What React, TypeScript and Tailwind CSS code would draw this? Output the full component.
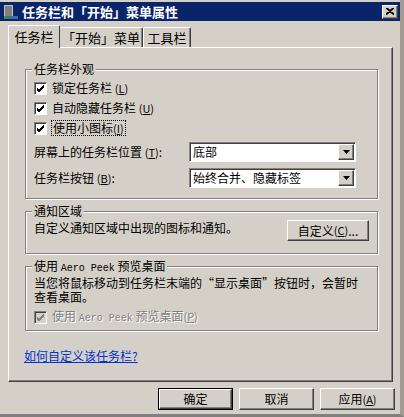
import React from "react";

const FONT = { fontFamily: '"SimSun", "Noto Sans CJK SC", "Noto Sans", sans-serif' };

const raised =
  "border border-t-white border-l-white border-r-[#404040] border-b-[#404040] shadow-[inset_-1px_-1px_0_#808080]";
const sunken =
  "border border-t-[#808080] border-l-[#808080] border-r-white border-b-white shadow-[inset_1px_1px_0_#404040]";

function Key({ k }: { k: string }) {
  return (
    <span className="text-[11px]">
      (<span className="underline">{k}</span>)
    </span>
  );
}

function Check({ disabled = false }: { disabled?: boolean }) {
  return (
    <span className={`w-[13px] h-[13px] shrink-0 flex items-center justify-center ${sunken} ${disabled ? "bg-[#d4d0c8]" : "bg-white"}`}>
      <svg width="9" height="9" viewBox="0 0 9 9">
        <path
          d="M1 4 L3 6 L8 1 M1 5 L3 7 L8 2 M1 6 L3 8 L8 3"
          stroke={disabled ? "#808080" : "#000"}
          strokeWidth="1"
          fill="none"
        />
      </svg>
    </span>
  );
}

function Group({ title, className, children }: { title: React.ReactNode; className?: string; children: React.ReactNode }) {
  return (
    <div className={`relative border border-[#808080] shadow-[inset_1px_1px_0_#fff,1px_1px_0_#fff] ${className ?? ""}`}>
      <span className="absolute -top-[7px] left-[6px] px-[2px] bg-[#d4d0c8] leading-[12px]">{title}</span>
      {children}
    </div>
  );
}

function Combo({ value }: { value: string }) {
  return (
    <div className={`w-[167px] h-[20px] bg-white flex items-center ${sunken}`}>
      <span className="flex-1 pl-[3px] leading-[14px]">{value}</span>
      <span className={`w-[16px] h-[16px] mr-[1px] bg-[#d4d0c8] flex items-center justify-center ${raised}`}>
        <svg width="7" height="4" viewBox="0 0 7 4">
          <path d="M0 0 H7 L3.5 4 Z" fill="#000" />
        </svg>
      </span>
    </div>
  );
}

function Button({ children, isDefault = false }: { children: React.ReactNode; isDefault?: boolean }) {
  return (
    <div className={`w-[75px] h-[22px] ${isDefault ? "border border-black" : ""}`}>
      <div className={`w-full h-full bg-[#d4d0c8] flex items-center justify-center leading-[14px] ${raised}`}>
        {children}
      </div>
    </div>
  );
}

export default function App() {
  return (
    <div
      className="relative w-[404px] h-[417px] bg-[#d4d0c8] text-[12px] text-black flex flex-col border-r-[4px] border-r-[#a09c94] border-b-[3px] border-b-[#808080]"
      style={FONT}
    >
      {/* title bar */}
      <div className="mt-[2px] h-[19px] bg-[#0a246a] flex items-center pl-[3px] pr-[2px]">
        <svg width="16" height="16" viewBox="0 0 16 16" className="shrink-0">
          <rect x="1" y="1" width="9" height="12" fill="#c0c0c0" />
          <rect x="2" y="2" width="7" height="10" fill="#808080" />
          <rect x="1" y="12" width="14" height="3" fill="#3a6ea5" />
          <rect x="1" y="12" width="3" height="3" fill="#2d9a2d" />
        </svg>
        <span className="ml-[3px] flex-1 text-white font-bold text-[13px] leading-[15px]">任务栏和「开始」菜单属性</span>
        <span className={`w-[16px] h-[14px] bg-[#d4d0c8] flex items-center justify-center ${raised}`}>
          <svg width="8" height="7" viewBox="0 0 8 7">
            <path d="M0 0 L8 7 M8 0 L0 7 M1 0 L8 6 M7 0 L0 6" stroke="#000" strokeWidth="1.2" />
          </svg>
        </span>
      </div>

      {/* tabs */}
      <div className="mt-[3px] pl-[8px] flex items-end h-[23px]">
        <div className="relative z-10 -mb-[1px] h-[23px] w-[52px] bg-[#d4d0c8] border-t border-l border-t-white border-l-white border-r border-r-[#404040] rounded-t-[2px] flex items-center justify-center text-[13px]">
          任务栏
        </div>
        <div className="h-[20px] w-[83px] border-t border-t-white border-r border-r-[#404040] shadow-[inset_-1px_0_0_#808080] rounded-t-[2px] flex items-center justify-center text-[13px]">
          「开始」菜单
        </div>
        <div className="h-[20px] w-[48px] border-t border-l border-t-white border-l-white border-r border-r-[#404040] shadow-[inset_-1px_0_0_#808080] rounded-t-[2px] flex items-center justify-center text-[13px]">
          工具栏
        </div>
      </div>

      {/* tab page */}
      <div className="ml-[8px] mr-[7px] h-[335px] border border-t-white border-l-white border-r-[#404040] border-b-[#404040] shadow-[inset_-1px_-1px_0_#808080] pt-[21px] pl-[16px] pr-[14px] flex flex-col">
        <Group title="任务栏外观" className="h-[130px] pt-[8px] pl-[8px] pr-[21px] flex flex-col">
          {[
            ["锁定任务栏 ", "L", false],
            ["自动隐藏任务栏 ", "U", false],
            ["使用小图标", "I", true],
          ].map(([label, k, focus]) => (
            <div key={k as string} className="h-[20px] flex items-center gap-[5px]">
              <Check />
              <span className={`leading-[14px] ${focus ? "outline outline-1 outline-dotted outline-black px-[1px]" : ""}`}>
                {label}
                <Key k={k as string} />
              </span>
            </div>
          ))}
          <div className="mt-[4px] h-[20px] flex items-center justify-between">
            <span>
              屏幕上的任务栏位置 <Key k="T" />:
            </span>
            <Combo value="底部" />
          </div>
          <div className="mt-[6px] h-[20px] flex items-center justify-between">
            <span>
              任务栏按钮 <Key k="B" />:
            </span>
            <Combo value="始终合并、隐藏标签" />
          </div>
        </Group>

        <Group title="通知区域" className="mt-[12px] h-[43px] pt-[8px] pl-[8px] pr-[8px] flex items-start justify-between">
          <span className="leading-[13px] mt-[1px]">自定义通知区域中出现的图标和通知。</span>
          <div className={`w-[82px] h-[21px] flex items-center justify-center ${raised}`}>
            自定义 <Key k="C" />...
          </div>
        </Group>

        <Group
          title={
            <>
              使用 <span className="font-['Liberation_Mono'] text-[10px]">Aero Peek</span> 预览桌面
            </>
          }
          className="mt-[12px] h-[65px] pt-[9px] pl-[8px] pr-[4px] flex flex-col"
        >
          <p className="leading-[14px]">
            当您将鼠标移动到任务栏末端的“显示桌面”按钮时，会暂时
            <br />
            查看桌面。
          </p>
          <div className="mt-[5px] flex items-center gap-[5px] text-[#808080] [text-shadow:1px_1px_0_#fff]">
            <Check disabled />
            <span className="leading-[14px]">
              使用 <span className="font-['Liberation_Mono'] text-[10px]">Aero Peek</span> 预览桌面
              <Key k="P" />
            </span>
          </div>
        </Group>

        <a className="mt-[18px] leading-[14px] text-[#0033cc] underline self-start -ml-[1px]">如何自定义该任务栏?</a>
      </div>

      {/* buttons */}
      <div className="mt-[6px] flex justify-end gap-[6px] pr-[5px]">
        <Button isDefault>确定</Button>
        <Button>取消</Button>
        <Button>
          应用 <Key k="A" />
        </Button>
      </div>
    </div>
  );
}
